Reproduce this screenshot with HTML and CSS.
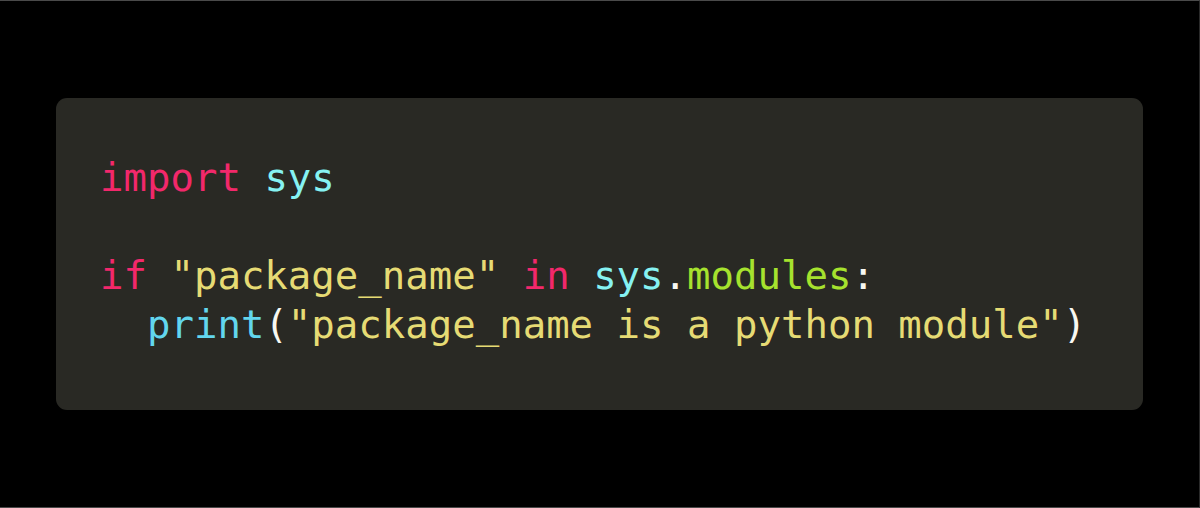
FILE: index.html
```html
<!DOCTYPE html>
<html>
<head>
<meta charset="utf-8">
<link rel="stylesheet" href="styles.css">
</head>
<body>
<div class="frame">
  <div class="card">
<pre class="code"><span class="kw">import</span> <span class="mod">sys</span>

<span class="kw">if</span> <span class="str">"package_name"</span> <span class="kw">in</span> <span class="mod">sys</span><span class="pun">.</span><span class="attr">modules</span><span class="pun">:</span>
  <span class="fn">print</span><span class="pun">(</span><span class="str">"package_name is a python module"</span><span class="pun">)</span></pre>
  </div>
</div>
</body>
</html>
```
FILE: styles.css
```css
html, body {
  margin: 0;
  padding: 0;
  background: #000;
}
.frame {
  box-sizing: border-box;
  width: 1200px;
  height: 508px;
  border-top: 1px solid #4a4a4a;
  border-bottom: 1px solid #4a4a4a;
  border-right: 1px solid #2a2a2a;
  padding: 97px 0 0 56px;
  background: #000;
}
.card {
  box-sizing: border-box;
  width: 1087px;
  height: 312px;
  background: #292924;
  border-radius: 11px;
  padding: 55px 0 0 44px;
}
.code {
  margin: 0;
  font-family: "DejaVu Sans Mono", monospace;
  font-size: 39px;
  line-height: 49px;
  color: #f8f8f2;
}
.kw { color: #f2286b; }
.mod { color: #86f2f2; }
.fn { color: #62d6ee; }
.str { color: #e6db74; }
.attr { color: #a6e22e; }
.pun { color: #f8f8f2; }
```
